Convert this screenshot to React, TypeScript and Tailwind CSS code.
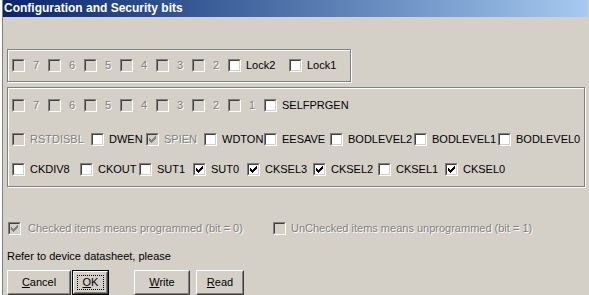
import React from 'react';

type Item = {
  label: string;
  w?: string;
  checked?: boolean;
  disabled?: boolean;
  digit?: boolean;
};

const CheckMark = ({ disabled }: { disabled?: boolean }) => (
  <svg width="7" height="7" viewBox="0 0 7 7" shapeRendering="crispEdges">
    <path
      fill={disabled ? '#808080' : '#000000'}
      d="M0 2h1v3H0z M1 3h1v3H1z M2 4h1v3H2z M3 3h1v3H3z M4 2h1v3H4z M5 1h1v3H5z M6 0h1v3H6z"
    />
  </svg>
);

const Box = ({ checked, disabled }: { checked?: boolean; disabled?: boolean }) => (
  <span className="block w-[13px] h-[13px] shrink-0 border border-t-[#808080] border-l-[#808080] border-b-white border-r-white">
    <span
      className={`flex w-full h-full items-center justify-center border border-t-[#404040] border-l-[#404040] border-b-[#d4d0c8] border-r-[#d4d0c8] ${
        disabled ? 'bg-[#d4d0c8]' : 'bg-white'
      }`}
    >
      {checked && <CheckMark disabled={disabled} />}
    </span>
  </span>
);

const Label = ({ children, disabled, className = '' }: { children: React.ReactNode; disabled?: boolean; className?: string }) => (
  <span
    className={`whitespace-nowrap ${className} ${
      disabled ? 'text-[#808080] [text-shadow:1px_1px_0_#ffffff]' : 'text-black'
    }`}
  >
    {children}
  </span>
);

const Check = ({ item }: { item: Item }) => (
  <div className={`flex items-center h-[13px] shrink-0 ${item.w ?? ''}`}>
    <Box checked={item.checked} disabled={item.disabled} />
    <Label disabled={item.disabled} className={item.digit ? 'ml-[8px]' : 'ml-[5px]'}>
      {item.label}
    </Label>
  </div>
);

const digits = (from: number, to: number): Item[] => {
  const out: Item[] = [];
  for (let i = from; i >= to; i--) out.push({ label: String(i), w: 'w-[36px]', disabled: true, digit: true });
  return out;
};

const lockRow: Item[] = [...digits(7, 2), { label: 'Lock2', w: 'w-[61px]' }, { label: 'Lock1' }];

const highRow: Item[] = [...digits(7, 1), { label: 'SELFPRGEN' }];

const fuseRow: Item[] = [
  { label: 'RSTDISBL', w: 'w-[79px]', disabled: true },
  { label: 'DWEN', w: 'w-[55px]' },
  { label: 'SPIEN', w: 'w-[58px]', checked: true, disabled: true },
  { label: 'WDTON', w: 'w-[60px]' },
  { label: 'EESAVE', w: 'w-[66px]' },
  { label: 'BODLEVEL2', w: 'w-[84px]' },
  { label: 'BODLEVEL1', w: 'w-[84px]' },
  { label: 'BODLEVEL0' },
];

const lowRow: Item[] = [
  { label: 'CKDIV8', w: 'w-[68px]' },
  { label: 'CKOUT', w: 'w-[59px]' },
  { label: 'SUT1', w: 'w-[54px]' },
  { label: 'SUT0', w: 'w-[54px]', checked: true },
  { label: 'CKSEL3', w: 'w-[66px]', checked: true },
  { label: 'CKSEL2', w: 'w-[65px]', checked: true },
  { label: 'CKSEL1', w: 'w-[67px]' },
  { label: 'CKSEL0', checked: true },
];

const Row = ({ items, className = '' }: { items: Item[]; className?: string }) => (
  <div className={`flex items-center h-[13px] ${className}`}>
    {items.map((it) => (
      <Check key={it.label} item={it} />
    ))}
  </div>
);

const Button = ({ children, className = '', isDefault }: { children: React.ReactNode; className?: string; isDefault?: boolean }) => (
  <div className={`h-[25px] shrink-0 ${isDefault ? 'border border-black' : ''} ${className}`}>
    <div className="h-full border border-t-white border-l-white border-b-[#404040] border-r-[#404040]">
      <div className="relative h-full flex items-center justify-center pb-[1px] border border-t-[#d4d0c8] border-l-[#d4d0c8] border-b-[#808080] border-r-[#808080]">
        {children}
        {isDefault && <span className="absolute inset-[2px] border border-dotted border-black" />}
      </div>
    </div>
  </div>
);

export default function App() {
  return (
    <div className="w-[589px] h-[295px] overflow-hidden bg-[#d4d0c8] pl-[3px] pr-[1px] font-['Liberation_Sans',Arial,sans-serif] text-[11px] leading-[13px] text-black shadow-[inset_2px_0_0_#ffffff,inset_3px_0_0_#808080]">
      {/* Title bar */}
      <div className="h-[17px] flex items-center pl-[1px] bg-linear-to-r from-[#0a246a] to-[#a6caf0]">
        <span className="text-white font-bold text-[12px] leading-[17px]">Configuration and Security bits</span>
      </div>

      <div className="pl-[4px]">
        {/* Lock bits */}
        <div className="mt-[32px] w-[344px] h-[33px] flex items-center pl-[4px] border border-[#808080] shadow-[inset_1px_1px_0_#ffffff,1px_1px_0_#ffffff]">
          <Row items={lockRow} />
        </div>

        {/* Fuse bits */}
        <div className="mt-[5px] w-[578px] h-[100px] flex flex-col pt-[11px] pl-[4px] border border-[#808080] shadow-[inset_1px_1px_0_#ffffff,1px_1px_0_#ffffff]">
          <Row items={highRow} />
          <Row items={fuseRow} className="mt-[21px]" />
          <Row items={lowRow} className="mt-[17px]" />
        </div>
      </div>

      {/* Legend */}
      <div className="mt-[35px] h-[13px] flex items-center">
        <div className="w-[265px] ml-[5px] flex items-center">
          <Box checked disabled />
          <Label disabled className="ml-[7px]">Checked items means programmed (bit = 0)</Label>
        </div>
        <div className="flex items-center">
          <Box disabled />
          <Label disabled className="ml-[5px]">UnChecked items means unprogrammed (bit = 1)</Label>
        </div>
      </div>

      <div className="mt-[15px] h-[13px] pl-[4px] whitespace-nowrap">Refer to device datasheet, please</div>

      {/* Buttons */}
      <div className="mt-[7px] pl-[4px] flex">
        <Button className="w-[64px]">
          <span><span className="underline">C</span>ancel</span>
        </Button>
        <Button className="w-[37px] ml-[1px]" isDefault>
          <span><span className="underline">O</span>K</span>
        </Button>
        <Button className="w-[56px] ml-[25px]">
          <span><span className="underline">W</span>rite</span>
        </Button>
        <Button className="w-[48px] ml-[6px]">
          <span><span className="underline">R</span>ead</span>
        </Button>
      </div>
    </div>
  );
}
